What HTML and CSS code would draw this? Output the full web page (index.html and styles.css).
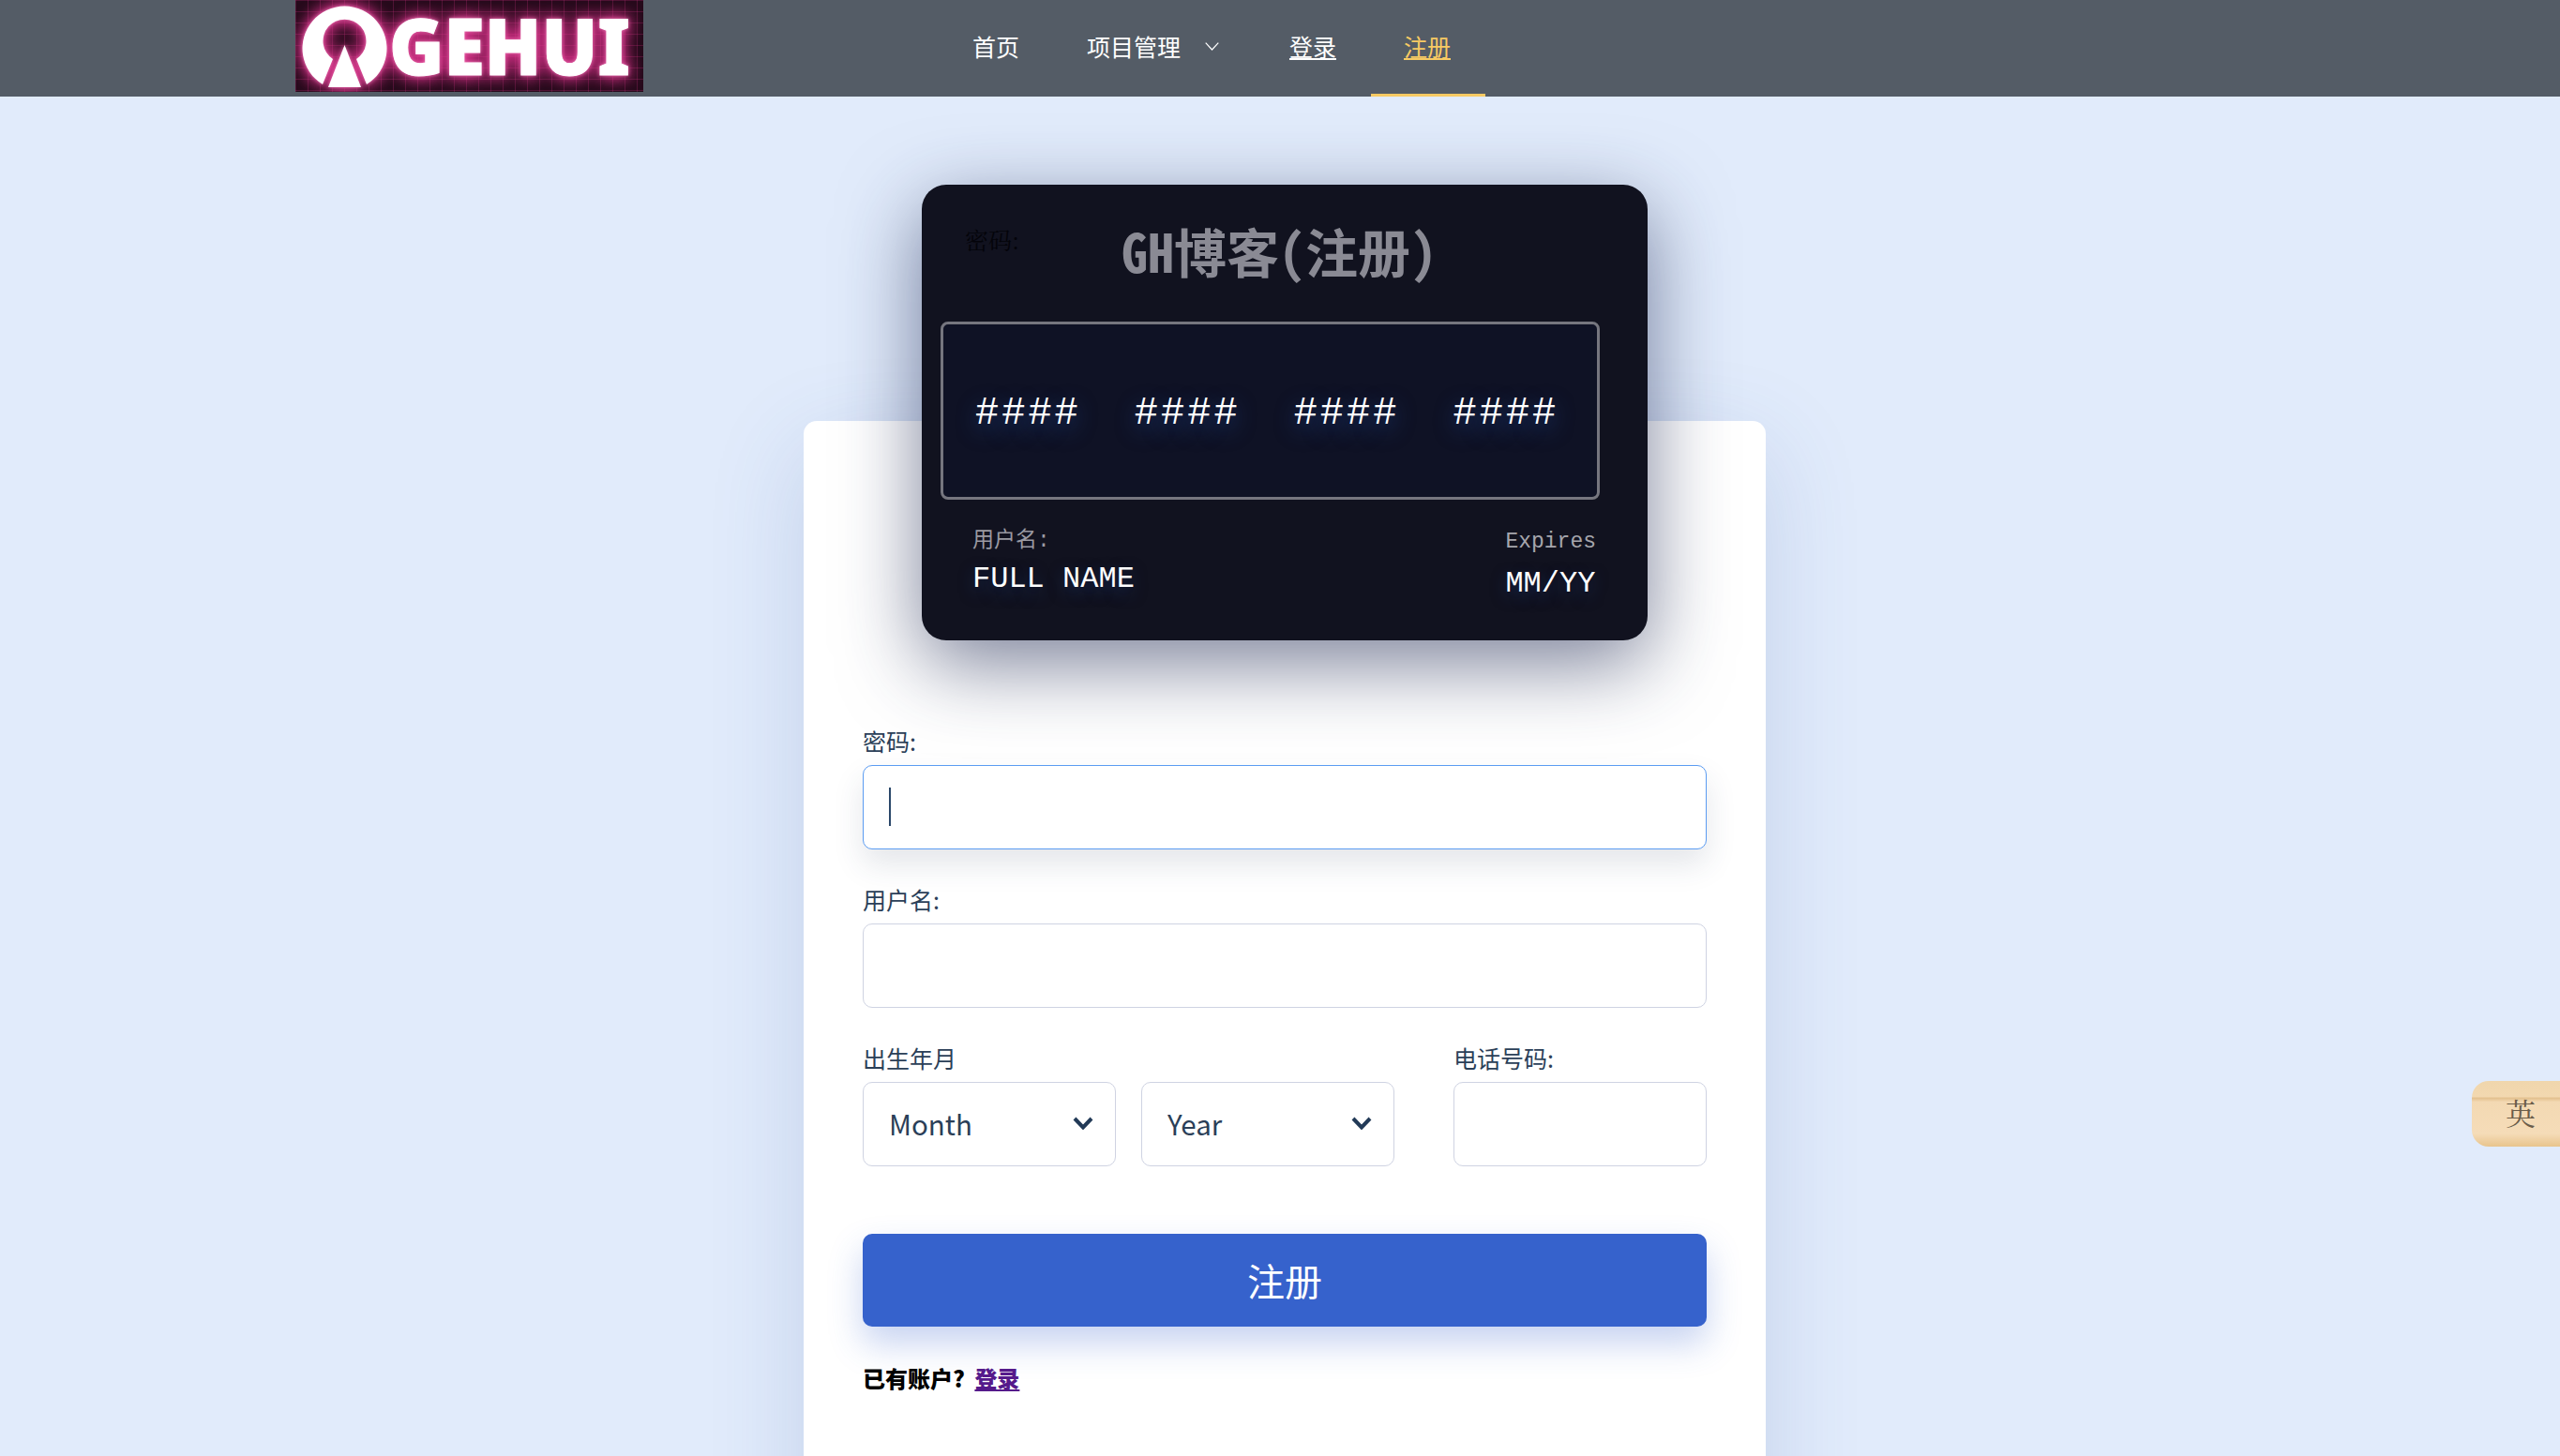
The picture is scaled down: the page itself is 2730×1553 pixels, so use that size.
FILE: index.html
```html
<!DOCTYPE html>
<html lang="zh-CN">
<head>
<meta charset="utf-8">
<title>GH博客(注册)</title>
<link rel="stylesheet" href="styles.css">
</head>
<body>
<header class="topbar">
  <a class="logo" href="#">
    <svg class="logo-svg" width="371" height="98" viewBox="0 0 371 98">
      <defs>
        <pattern id="grid" width="13" height="12" patternUnits="userSpaceOnUse">
          <path d="M0 .5H13M.5 0V12" stroke="#e0358c" stroke-opacity=".22" stroke-width="1" fill="none"/>
        </pattern>
        <filter id="glow" x="-10%" y="-40%" width="120%" height="180%" color-interpolation-filters="sRGB">
          <feGaussianBlur in="SourceAlpha" stdDeviation="9" result="wide"/>
          <feFlood flood-color="#d42f86" result="pink"/>
          <feComposite in="pink" in2="wide" operator="in" result="glowWide"/>
          <feGaussianBlur in="SourceAlpha" stdDeviation="2" result="near"/>
          <feFlood flood-color="#f27ab8" result="pale"/>
          <feComposite in="pale" in2="near" operator="in" result="glowNear"/>
          <feMerge>
            <feMergeNode in="glowWide"/>
            <feMergeNode in="glowWide"/>
            <feMergeNode in="glowNear"/>
          </feMerge>
        </filter>
        <g id="mark">
          <path d="M29 90 A45 45 0 1 1 76 90 L65 63 A23 23 0 1 0 40 63 Z" fill="#fff"/>
          <path d="M52.500 48 L70 93 L35 93 Z" fill="#fff"/>
          <text class="logo-text" x="100" y="80" textLength="257" lengthAdjust="spacingAndGlyphs">GEHUI</text>
        </g>
      </defs>
      <rect width="371" height="98" fill="#260a1b"/>
      <use href="#mark" filter="url(#glow)"/>
      <rect width="371" height="98" fill="url(#grid)"/>
      <use href="#mark"/>
    </svg>
  </a>
  <nav class="nav">
    <a class="nav-item" href="#">首页</a>
    <a class="nav-item nav-drop" href="#">项目管理
      <svg class="nav-chev" width="15" height="9" viewBox="0 0 15 9"><path d="M.7.7 7.500 8 14.300.7" fill="none" stroke="#fff" stroke-width="1.200"/></svg>
    </a>
    <a class="nav-item nav-under" href="#">登录</a>
    <a class="nav-item nav-under nav-active" href="#">注册</a>
  </nav>
</header>

<main class="stage">
  <section class="panel">
    <div class="cc">
      <span class="cc-ghost">密码:</span>
      <h1 class="cc-title">GH博客(注册)</h1>
      <div class="cc-number">
        <span>####</span><span>####</span><span>####</span><span>####</span>
      </div>
      <div class="cc-foot">
        <div>
          <div class="cc-small cc-small-cjk">用户名:</div>
          <div class="cc-name">FULL NAME</div>
        </div>
        <div>
          <div class="cc-small cc-expires">Expires</div>
          <div class="cc-date">MM/YY</div>
        </div>
      </div>
    </div>

    <form class="form">
      <div class="group">
        <label class="lbl">密码:</label>
        <div class="inp-wrap">
          <input class="inp inp-focus" type="password">
          <span class="caret"></span>
        </div>
      </div>
      <div class="group">
        <label class="lbl">用户名:</label>
        <input class="inp" type="text">
      </div>
      <div class="row3">
        <div>
          <label class="lbl">出生年月</label>
          <div class="selects">
            <div class="sel-wrap">
              <select class="sel"><option>Month</option></select>
              <svg class="sel-chev" width="22" height="14" viewBox="0 0 22 14"><path d="M2 2 11 11.500 20 2" fill="none" stroke="#223a57" stroke-width="4"/></svg>
            </div>
            <div class="sel-wrap">
              <select class="sel"><option>Year</option></select>
              <svg class="sel-chev" width="22" height="14" viewBox="0 0 22 14"><path d="M2 2 11 11.500 20 2" fill="none" stroke="#223a57" stroke-width="4"/></svg>
            </div>
          </div>
        </div>
        <div>
          <label class="lbl">电话号码:</label>
          <input class="inp" type="text">
        </div>
      </div>
      <button class="submit" type="button">注册</button>
      <p class="hint">已有账户? <a class="hint-link" href="#">登录</a></p>
    </form>
  </section>
  <aside class="ime">英</aside>
</main>
</body>
</html>
```

FILE: styles.css
```css
* { box-sizing: border-box; }
html, body { margin: 0; height: 100%; overflow: hidden; }
body {
  background: #e1ebfb;
  font-family: "Noto Sans CJK SC", "Noto Sans", sans-serif;
  color: #2b3f58;
}
.topbar {
  height: 103px;
  background: #545c66;
  display: flex;
  align-items: flex-start;
  padding-left: 315px;
}
.logo { display: block; width: 371px; height: 98px; margin-right: 316px; }
.logo-svg { display: block; }
.logo-text {
  font-family: "Noto Sans", sans-serif;
  font-weight: 900;
  font-size: 84px;
  fill: #fff;
  stroke: #fff;
  stroke-width: 1px;
}
.nav { display: flex; height: 103px; }
.nav-item {
  display: flex;
  align-items: center;
  justify-content: center;
  height: 103px;
  width: 122px;
  color: #fff;
  font-size: 25px;
  text-decoration: none;
  padding: 0 2px 5px 0;
}
.nav-drop { width: 216px; justify-content: flex-start; padding-left: 35px; }
.nav-chev { margin-left: 26px; margin-top: 1px; }
.nav-under { text-decoration: underline; text-decoration-thickness: 2px; text-underline-offset: 2px; }
.nav-active {
  color: #f7ca63;
  border-bottom: 3px solid #f7ca63;
  padding-bottom: 2px;
}

.stage { position: relative; display: flex; justify-content: center; padding-top: 346px; padding-left: 10px; }
.panel {
  position: relative;
  width: 1026px;
  min-height: 1200px;
  background: #fff;
  border-radius: 14px;
  padding: 324px 63px 0;
  box-shadow: 0 30px 100px rgba(60, 95, 160, .18);
}
.cc {
  position: absolute;
  top: -252px;
  left: 126px;
  width: 774px;
  height: 486px;
  background: #11121f;
  border-radius: 26px;
  padding: 0 52px 0 20px;
  box-shadow: 0 25px 85px rgba(35, 45, 85, .6);
  font-family: "Liberation Mono", "Noto Sans Mono CJK SC", monospace;
  color: #fff;
}
.cc-ghost {
  position: absolute;
  left: 46px;
  top: 40px;
  font-family: "Noto Serif CJK SC", "Noto Sans CJK SC", serif;
  font-size: 25px;
  color: #04040a;
}
.cc-title {
  margin: 0;
  height: 146px;
  display: flex;
  align-items: center;
  justify-content: center;
  padding-left: 20px;
  padding-bottom: 8px;
  font-family: "Noto Sans Mono CJK SC", "Noto Sans CJK SC", monospace;
  font-weight: 700;
  font-size: 56px;
  color: #8a8a94;
}
.cc-number {
  height: 190px;
  width: 703px;
  border: 3px solid #76767f;
  border-radius: 8px;
  background: #0f1225;
  display: flex;
  gap: 57px;
  align-items: center;
  padding-left: 34px;
  padding-top: 5px;
  font-size: 42px;
  letter-spacing: 3px;
  text-shadow: 0 8px 22px rgba(28, 62, 130, .9);
}
.cc-foot {
  display: flex;
  justify-content: space-between;
  margin-top: 24px;
  padding: 0 3px 0 34px;
}
.cc-small { font-size: 23px; line-height: 34px; color: #a6a6ad; }
.cc-expires { padding-top: 4px; }
.cc-small-cjk { color: #9a9aa2; padding-top: 3px; }
.cc-name { font-size: 32px; line-height: 34px; margin-top: 7px; text-shadow: 0 6px 16px rgba(28, 62, 130, .5); }
.cc-date { font-size: 32px; line-height: 34px; margin-top: 11px; text-shadow: 0 6px 16px rgba(28, 62, 130, .5); }

.lbl { display: block; font-size: 25px; line-height: 34px; margin-bottom: 9px; color: #2b3f58; }
.group { margin-bottom: 36px; }
.inp-wrap { position: relative; }
.inp {
  display: block;
  width: 100%;
  height: 90px;
  border: 1px solid #cfd3e2;
  border-radius: 10px;
  background: #fff;
  outline: none;
}
.inp-focus { border-color: #5b9cf2; box-shadow: 0 16px 32px rgba(50, 60, 90, .13); }
.caret {
  position: absolute;
  left: 28px;
  top: 24px;
  width: 2px;
  height: 41px;
  background: #2a4769;
}
.row3 { display: grid; grid-template-columns: 567px 270px; column-gap: 63px; margin-bottom: 72px; }
.selects { display: grid; grid-template-columns: 270px 270px; column-gap: 27px; }
.sel-wrap { position: relative; }
.sel {
  display: block;
  width: 100%;
  height: 90px;
  padding: 0 0 3px 27px;
  appearance: none;
  -webkit-appearance: none;
  border: 1px solid #cfd3e2;
  border-radius: 10px;
  background: #fff;
  font-family: inherit;
  font-size: 29.500px;
  color: #2b3f58;
}
.sel-chev { position: absolute; right: 24px; top: 37px; pointer-events: none; }
.submit {
  display: block;
  width: 100%;
  height: 99px;
  border: 0;
  border-radius: 10px;
  background: #3662cc;
  color: #fff;
  font-family: inherit;
  font-size: 40px;
  padding-bottom: 3px;
  box-shadow: 0 18px 36px rgba(54, 98, 204, .28);
}
.hint { margin: 38px 0 0; font-size: 24px; line-height: 34px; font-weight: 900; color: #000; }
.hint-link { color: #551a8b; margin-left: 5px; }
.ime {
  position: absolute;
  left: 2636px;
  top: 1050px;
  width: 94px;
  height: 70px;
  border-radius: 18px 0 0 18px;
  background: linear-gradient(180deg, #f0d6ac 0, #f2d8b0 24%, #e3c08e 26%, #f3d9b3 32%, #f5dcb8 80%, #e8c48c 100%);
  font-family: "Noto Serif CJK SC", "Noto Sans CJK SC", serif;
  font-size: 32px;
  color: #6b5d4a;
  display: flex;
  align-items: center;
  justify-content: center;
  padding: 0 0 4px 10px;
}
```
